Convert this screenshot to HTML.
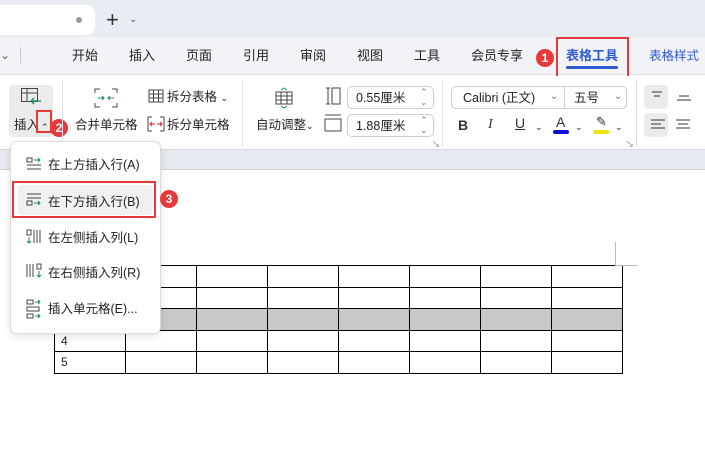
<!DOCTYPE html>
<html><head><meta charset="utf-8"><style>
*{margin:0;padding:0;box-sizing:border-box}
body{width:705px;height:469px;overflow:hidden;background:#fff;font-family:"Liberation Sans","Noto Sans CJK SC",sans-serif;font-size:13px;line-height:16px;color:#222;position:relative}
.a{position:absolute;white-space:nowrap}
.sep{position:absolute;width:1px;background:#dde0e4}
.badge{position:absolute;width:18px;height:18px;border-radius:50%;background:#e8393a;color:#fff;font-size:12px;font-weight:bold;text-align:center;line-height:18px}
.red{position:absolute;border:2px solid #e8393a}
.box{position:absolute;border:1px solid #c9ccd1;border-radius:5px;background:#fff}
.mi{position:absolute;left:48px;font-size:12.5px;color:#222}
</style></head><body>
<div class="a" style="left:0;top:0;width:705px;height:37px;background:#e9edf3"></div>
<div class="a" style="left:0;top:5px;width:95px;height:30px;background:#fff;border-radius:0 8px 8px 0"></div>
<div class="a" style="left:76px;top:17px;width:6px;height:6px;border-radius:50%;background:#999"></div>
<div class="a" style="left:106px;top:9px;font-size:22px;line-height:22px;color:#333">+</div>
<div class="a" style="left:129px;top:12px;font-size:10px;color:#555">⌄</div>
<div class="a" style="left:0;top:37px;width:705px;height:38px;background:#f1f3f7;border-bottom:1px solid #dfe2e6"></div>
<div class="a" style="left:0;top:47px;font-size:12px;color:#666">⌄</div>
<div class="sep" style="left:20px;top:47px;height:16px;background:#ccc"></div>
<div class="a" style="left:72px;top:48px">开始</div>
<div class="a" style="left:129px;top:48px">插入</div>
<div class="a" style="left:186px;top:48px">页面</div>
<div class="a" style="left:243px;top:48px">引用</div>
<div class="a" style="left:300px;top:48px">审阅</div>
<div class="a" style="left:357px;top:48px">视图</div>
<div class="a" style="left:414px;top:48px">工具</div>
<div class="a" style="left:471px;top:48px">会员专享</div>
<div class="badge" style="left:536px;top:49px">1</div>
<div class="a" style="left:566px;top:48px;color:#2f5ad6;font-weight:bold">表格工具</div>
<div class="a" style="left:566px;top:66px;width:52px;height:3px;background:#2f5ad6;border-radius:2px"></div>
<div class="red" style="left:556px;top:37px;width:73px;height:43px"></div>
<div class="a" style="left:649px;top:48px;color:#2f5ad6;font-size:12.5px">表格样式</div>
<div class="a" style="left:0;top:76px;width:705px;height:73px;background:#fff"></div>
<div class="a" style="left:9px;top:85px;width:44px;height:52px;background:#ebebeb;border-radius:4px"></div>
<svg class="a" style="left:20px;top:87px" width="22" height="20"><rect x="1.5" y="1.5" width="16" height="13" fill="none" stroke="#444"/><line x1="1.5" y1="6" x2="17" y2="6" stroke="#444"/><line x1="7" y1="1.5" x2="7" y2="14" stroke="#444"/><path d="M21 14H11M14 11l-3 3 3 3" stroke="#1e8a5a" stroke-width="1.3" fill="none"/></svg>
<div class="a" style="left:14px;top:117px;font-size:12.5px">插入</div>
<div class="a" style="left:41px;top:119px;font-size:9px">⌃</div>
<div class="red" style="left:36px;top:110px;width:16px;height:23px"></div>
<div class="badge" style="left:50px;top:119px">2</div>
<div class="sep" style="left:62px;top:80px;height:66px"></div>
<svg class="a" style="left:94px;top:88px" width="24" height="20"><path d="M1 5V1h5M18 1h5v4M1 15v4h5M18 19h5v-4" stroke="#444" fill="none"/><path d="M4 10h6M8 8l2 2-2 2M20 10h-6M16 8l-2 2 2 2" stroke="#1e8a5a" fill="none"/></svg>
<div class="a" style="left:75px;top:117px;font-size:12.5px">合并单元格</div>
<svg class="a" style="left:148px;top:89px" width="16" height="14"><rect x="1" y="1" width="14" height="12" fill="none" stroke="#444"/><path d="M1 5h14M1 9h14M5.5 1v12M10.5 1v12" stroke="#444"/></svg>
<div class="a" style="left:167px;top:89px;font-size:12.5px">拆分表格 <span style="font-size:9px">⌄</span></div>
<svg class="a" style="left:147px;top:116px" width="18" height="16"><path d="M5 1H1v14h4M13 1h4v14h-4" stroke="#444" fill="none"/><path d="M3 8h5M5 6l-2 2 2 2M15 8h-5M13 6l2 2-2 2" stroke="#d0263a" fill="none"/></svg>
<div class="a" style="left:167px;top:117px;font-size:12.5px">拆分单元格</div>
<div class="sep" style="left:242px;top:80px;height:66px"></div>
<svg class="a" style="left:274px;top:87px" width="20" height="22"><path d="M7 3l3-2 3 2M7 19l3 2 3-2" stroke="#1e8a5a" fill="none"/><rect x="2" y="5" width="16" height="12" fill="none" stroke="#444"/><path d="M2 9h16M2 13h16M7 5v12M13 5v12" stroke="#444"/></svg>
<div class="a" style="left:256px;top:117px;font-size:12.5px">自动调整<span style="font-size:9px">⌄</span></div>
<svg class="a" style="left:325px;top:87px" width="16" height="18"><path d="M1 1h4M1 17h4M3 1v16" stroke="#444" fill="none"/><rect x="7" y="1" width="8" height="16" fill="none" stroke="#444"/></svg>
<svg class="a" style="left:324px;top:114px" width="18" height="18"><path d="M1 1h16M1 17h16" stroke="#444"/><rect x="1" y="5" width="16" height="12" fill="none" stroke="#444"/></svg>
<div class="box" style="left:347px;top:86px;width:87px;height:23px"></div>
<div class="a" style="left:356px;top:90px;font-size:12.5px">0.55厘米</div>
<div class="a" style="left:420px;top:87px;font-size:9px;color:#777;line-height:10px">⌃<br>⌄</div>
<div class="box" style="left:347px;top:114px;width:87px;height:23px"></div>
<div class="a" style="left:356px;top:118px;font-size:12.5px">1.88厘米</div>
<div class="a" style="left:420px;top:115px;font-size:9px;color:#777;line-height:10px">⌃<br>⌄</div>
<div class="a" style="left:432px;top:137px;font-size:8px;color:#777">↘</div>
<div class="sep" style="left:442px;top:80px;height:66px"></div>
<div class="box" style="left:451px;top:86px;width:176px;height:23px"></div>
<div class="sep" style="left:564px;top:86px;height:23px;background:#c9ccd1"></div>
<div class="a" style="left:463px;top:90px;font-size:12.5px">Calibri (正文)</div>
<div class="a" style="left:550px;top:89px;font-size:10px;color:#777">⌄</div>
<div class="a" style="left:574px;top:90px;font-size:12.5px">五号</div>
<div class="a" style="left:614px;top:89px;font-size:10px;color:#777">⌄</div>
<div class="a" style="left:458px;top:117px;font-size:14px;font-weight:bold;color:#333">B</div>
<div class="a" style="left:488px;top:117px;font-size:14px;font-style:italic;color:#333;font-family:'Liberation Serif',serif">I</div>
<div class="a" style="left:515px;top:115px;font-size:14px;text-decoration:underline;color:#333">U</div>
<div class="a" style="left:535px;top:119px;font-size:9px">⌄</div>
<div class="a" style="left:556px;top:114px;font-size:14px;color:#333">A</div>
<div class="a" style="left:553px;top:130px;width:16px;height:4px;background:#1010d0;border-radius:2px"></div>
<div class="a" style="left:575px;top:119px;font-size:9px">⌄</div>
<div class="a" style="left:596px;top:114px;font-size:13px;color:#333">✎</div>
<div class="a" style="left:593px;top:130px;width:16px;height:4px;background:#f0e010;border-radius:2px"></div>
<div class="a" style="left:615px;top:119px;font-size:9px">⌄</div>
<div class="a" style="left:626px;top:137px;font-size:8px;color:#777">↘</div>
<div class="sep" style="left:636px;top:80px;height:66px"></div>
<div class="a" style="left:644px;top:85px;width:24px;height:24px;background:#ebebeb;border-radius:4px"></div>
<div class="a" style="left:644px;top:113px;width:24px;height:24px;background:#ebebeb;border-radius:4px"></div>
<svg class="a" style="left:649px;top:90px" width="50" height="40"><path d="M3 2h10M5 6h6M30 6h10M28 10h14M2 30h14M2 34h10M2 38h14M27 30h14M29 34h10M27 38h14" stroke="#333"/></svg>
<div class="a" style="left:0;top:149px;width:705px;height:21px;background:#e6eaf0;border-top:1px solid #d5d8dc;border-bottom:1px solid #d0d3d7"></div>
<div class="a" style="left:55px;top:309px;width:568px;height:21px;background:#c8c8c8"></div>
<svg class="a" style="left:0;top:0" width="705" height="469"><g stroke="#000" stroke-width="1" shape-rendering="crispEdges">
<path d="M54 265.5H623M54 287.5H623M54 308.5H623M54 330.5H623M54 351.5H623M54 373.5H623"/>
<path d="M54.5 265V374M125.5 265V374M196.5 265V374M267.5 265V374M338.5 265V374M409.5 265V374M480.5 265V374M551.5 265V374M622.5 265V374"/></g>
<path d="M615.5 242V265.5H638" stroke="#bbb" fill="none"/></svg>
<div class="a" style="left:61px;top:333px;font-size:12px">4</div>
<div class="a" style="left:61px;top:354px;font-size:12px">5</div>
<div class="a" style="left:10px;top:141px;width:151px;height:193px;background:#fff;border:1px solid #dcdcdc;border-radius:7px;box-shadow:0 2px 8px rgba(0,0,0,.12)"></div>
<div class="a" style="left:18px;top:185px;width:135px;height:30px;background:#f0f0f0;border-radius:4px"></div>
<div class="red" style="left:12px;top:181px;width:144px;height:37px"></div>
<div class="badge" style="left:160px;top:190px">3</div>
<svg class="a" style="left:26px;top:157px" width="16" height="170"><g fill="none" stroke="#444">
<rect x="1" y="1" width="5" height="4"/><path d="M1 8h14M1 12h14"/><path d="M8 3h6M12 1l2 2-2 2" stroke="#1e8a5a"/>
<path d="M1 37h14M1 41h14"/><rect x="1" y="44" width="5" height="4"/><path d="M8 46h6M12 44l2 2-2 2" stroke="#1e8a5a"/>
<rect x="1" y="73" width="4" height="5"/><path d="M8 73v13M11 73v13M14 73v13"/><path d="M3 80v6M1 84l2 2 2-2" stroke="#1e8a5a"/>
<rect x="11" y="107" width="4" height="5"/><path d="M1 107v13M4 107v13M7 107v13"/><path d="M13 114v6M11 118l2 2 2-2" stroke="#1e8a5a"/>
<rect x="1" y="143" width="6" height="4"/><rect x="1" y="150" width="12" height="4"/><rect x="1" y="157" width="6" height="4"/><path d="M9 145h5M12 143l2 2-2 2M9 159h5M12 157l2 2-2 2" stroke="#1e8a5a"/></g></svg>
<div class="mi" style="top:157px">在上方插入行(A)</div>
<div class="mi" style="top:194px">在下方插入行(B)</div>
<div class="mi" style="top:230px">在左侧插入列(L)</div>
<div class="mi" style="top:265px">在右侧插入列(R)</div>
<div class="mi" style="top:301px">插入单元格(E)...</div>
</body></html>
